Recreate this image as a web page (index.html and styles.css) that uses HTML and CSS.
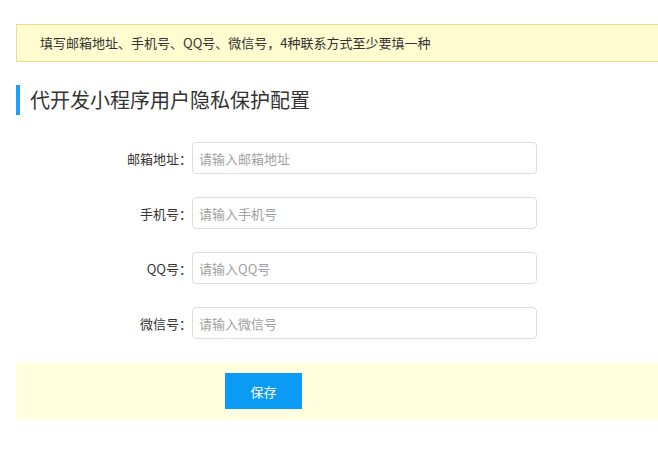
FILE: index.html
```html
<!DOCTYPE html>
<html lang="zh">
<head>
<meta charset="utf-8">
<title>代开发小程序用户隐私保护配置</title>
<link rel="stylesheet" href="styles.css">
</head>
<body>
<div class="page">
  <div class="notice">填写邮箱地址、手机号、QQ号、微信号，4种联系方式至少要填一种</div>
  <h2 class="title">代开发小程序用户隐私保护配置</h2>
  <form class="form">
    <div class="row">
      <label class="label">邮箱地址：</label>
      <input class="input" type="text" placeholder="请输入邮箱地址">
    </div>
    <div class="row">
      <label class="label">手机号：</label>
      <input class="input" type="text" placeholder="请输入手机号">
    </div>
    <div class="row">
      <label class="label">QQ号：</label>
      <input class="input" type="text" placeholder="请输入QQ号">
    </div>
    <div class="row">
      <label class="label">微信号：</label>
      <input class="input" type="text" placeholder="请输入微信号">
    </div>
    <div class="actions">
      <button class="btn" type="button">保存</button>
    </div>
  </form>
</div>
</body>
</html>
```
FILE: styles.css
```css
html, body {
  margin: 0;
  padding: 0;
  background: #fff;
}
body {
  font-family: "Noto Sans CJK SC", "Noto Sans", sans-serif;
  color: #333;
}
.page {
  padding: 24px 0 0 16px;
}
.notice {
  box-sizing: border-box;
  height: 38px;
  line-height: 36px;
  padding-left: 23px;
  background: #fffcd0;
  border: 1px solid #f0d990;
  border-right: 0;
  font-size: 13px;
  color: #333;
}
.title {
  margin: 23px 0 0;
  height: 30px;
  line-height: 30px;
  border-left: 4px solid #1e9fff;
  padding-left: 10px;
  font-size: 20px;
  font-weight: normal;
  color: #333;
}
.form {
  margin: 27px 0 0;
  display: flex;
  flex-direction: column;
  gap: 23px;
}
.row {
  display: flex;
  align-items: center;
  height: 32px;
}
.label {
  width: 176px;
  text-align: right;
  font-size: 13px;
  color: #333;
}
.input {
  box-sizing: border-box;
  width: 345px;
  height: 32px;
  border: 1px solid #ddd;
  border-radius: 4px;
  padding: 0 6px;
  font-family: inherit;
  font-size: 13px;
  color: #333;
  outline: none;
}
.input::placeholder {
  color: #a0a0a0;
}
.actions {
  height: 58px;
  box-sizing: border-box;
  padding: 11px 0 0 209px;
  background: #fffede;
}
.btn {
  width: 77px;
  height: 36px;
  border: none;
  background: #0b9bf5;
  color: #fff;
  font-family: inherit;
  font-size: 13px;
  padding: 0;
  cursor: pointer;
}
```
